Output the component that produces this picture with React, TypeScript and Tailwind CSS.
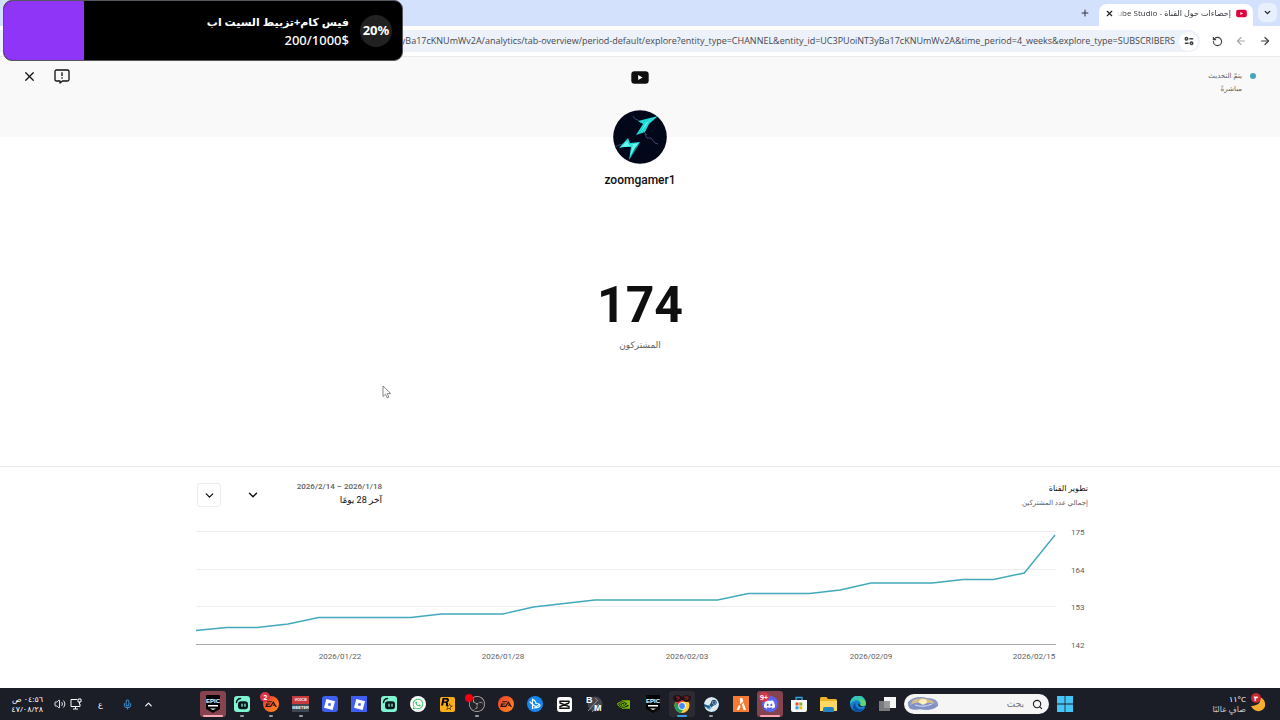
import type { ReactNode } from "react";
import { ArrowLeft, ArrowRight, ChevronDown, ChevronUp, Mic, Plus, RotateCcw, Search, Volume2, X } from "lucide-react";
import { SiDiscord, SiEa, SiNvidia, SiObsstudio, SiRoblox, SiRockstargames, SiSteam } from "react-icons/si";
import { FaWhatsapp } from "react-icons/fa";

const ADDRESS =
  "yBa17cKNUmWv2A/analytics/tab-overview/period-default/explore?entity_type=CHANNEL&entity_id=UC3PUoiNT3yBa17cKNUmWv2A&time_period=4_weeks&explore_type=SUBSCRIBERS";

function GoalOverlay() {
  return (
    <aside className="absolute left-[3px] top-0 z-10 flex h-[61px] w-[400px] items-center overflow-hidden rounded-[9px] border border-[#55565c] bg-black font-['Noto_Sans','DejaVu_Sans',sans-serif] text-white">
      <div className="h-full w-1/5 bg-[#8f35f8]" />
      <div className="flex flex-1 flex-col items-end pr-[11px] text-right">
        <p dir="rtl" className="text-[11px] font-bold leading-[19px]">فيس كام+تزبيط السيت اب</p>
        <p className="text-[13px] font-medium leading-[19px]">200/1000$</p>
      </div>
      <div className="mr-[10px] flex size-8 items-center justify-center rounded-full bg-[#212121] text-[13px] font-bold">20%</div>
    </aside>
  );
}

function TuneIcon() {
  return (
    <svg viewBox="0 0 12 12" className="size-[10px]" fill="none" stroke="#3c4043" strokeWidth="1.8">
      <circle cx="3" cy="3.4" r="1.5" />
      <path d="M6.5 3.4H11M1 8.6h4.5" />
      <circle cx="9" cy="8.6" r="1.5" />
    </svg>
  );
}

function YouTubeMark({ className }: { className: string }) {
  return (
    <svg viewBox="0 0 18 13" className={className}>
      <rect x="0.3" y="0.3" width="17.4" height="12.4" rx="3.2" fill="currentColor" />
      <path d="M7.2 4 11.6 6.5 7.2 9z" fill="#fff" />
    </svg>
  );
}

function BrowserChrome() {
  return (
    <header className="border-b border-[#e9ebe6] bg-white">
      <div className="flex h-[26px] items-end justify-end bg-[#d3e1fd]">
        <button aria-label="علامة تبويب جديدة" className="mr-1 flex h-[26px] w-5 items-center justify-center text-[#30353d]">
          <Plus size={10} strokeWidth={2.5} />
        </button>
        <div className="mr-[5px] flex h-[22px] w-[154px] items-center rounded-t-lg bg-white px-[6px] pb-1">
          <button aria-label="إغلاق" className="text-[#1f1f1f]"><X size={9} strokeWidth={3} /></button>
          <p
            dir="rtl"
            className="ml-auto overflow-hidden whitespace-nowrap font-['Open_Sans','DejaVu_Sans',sans-serif] text-[8px] leading-4 text-[#33363b] [mask-image:linear-gradient(to_right,transparent,black_8px)]"
          >
            إحصاءات حول القناة - ube Studio
          </p>
          <YouTubeMark className="ml-[5px] h-[9px] w-[11px] shrink-0 text-[#e3003c]" />
        </div>
        <button aria-label="بحث في علامات التبويب" className="mb-1 flex h-[19px] w-[19px] items-center justify-center rounded-md bg-[#e8effd] text-[#1f1f1f]">
          <ChevronDown size={9} strokeWidth={3.4} />
        </button>
        <div className="w-[3px]" />
      </div>
      <div className="flex h-[30px] items-center pr-[9px]">
        <div className="flex h-[22px] flex-1 items-center rounded-r-full bg-[#edf1fa] pr-[2px]">
          <input
            aria-label="شريط العناوين"
            readOnly
            value={ADDRESS}
            className="min-w-0 flex-1 bg-transparent text-right font-['Open_Sans',sans-serif] text-[9px] text-[#45484d] outline-none"
          />
          <button aria-label="معلومات الموقع" className="ml-1 flex size-[19px] items-center justify-center rounded-full bg-white"><TuneIcon /></button>
        </div>
        <button aria-label="إعادة التحميل" className="ml-3 text-[#3c4043]"><RotateCcw size={11} strokeWidth={2.4} /></button>
        <button aria-label="التالي" className="ml-3 text-[#a5a7aa]"><ArrowLeft size={12} strokeWidth={2.2} /></button>
        <button aria-label="رجوع" className="ml-3 text-[#3c4043]"><ArrowRight size={12} strokeWidth={2.4} /></button>
      </div>
    </header>
  );
}

function Avatar() {
  return (
    <svg viewBox="0 0 54 54" className="size-[54px]" role="img" aria-label="zoomgamer1">
      <circle cx="27" cy="27" r="26.8" fill="#03071a" />
      <g fill="none" stroke="#4b5288" strokeWidth="0.8">
        <path d="M20 6 22 9l3 1 3 3M32 24l2 4 4 0 4 5 3 1M2 37l4-2 4-1M31 22l3 3" />
      </g>
      <path d="M45 6 36 14 32 22 23 25 30 14 25 11 33 9z" fill="#20d9d6" />
      <path d="M43 7 33 13 28 22 35 12z" fill="#7afff0" />
      <path d="M6 38 15 28 17 33 27 32 16 50 18 37 11 37z" fill="#20d9d6" />
      <path d="M8 37 14 31 16 35 25 33 17 46 20 35 12 37z" fill="#6af7ec" />
      <path d="M27 33 16 50 22 38z" fill="#12858f" />
    </svg>
  );
}

const SERIES = [
  630.5, 627.5, 627.5, 624, 617.5, 617.5, 617.5, 617.5, 614, 614, 614, 607, 603.5, 600, 600, 600, 600, 600, 593.5, 593.5, 593.5, 590, 583, 583, 583, 579.5,
  579.5, 573, 535,
];
const Y_TICKS: [string, number][] = [["175", 531.5], ["164", 569.5], ["153", 606.5], ["142", 644.5]];
const X_TICKS: [string, number][] = [["2026/01/22", 144], ["2026/01/28", 307], ["2026/02/03", 491], ["2026/02/09", 675], ["2026/02/15", 838]];

function SubscribersChart() {
  const points = SERIES.map((y, i) => `${(i * 859) / 28},${y - 520}`).join(" ");
  return (
    <svg viewBox="0 0 892 146" className="w-full font-['Roboto',sans-serif]" role="img" aria-label="إجمالي عدد المشتركين">
      {Y_TICKS.map(([label, y]) => (
        <g key={label}>
          <line x1="0" x2="860" y1={y - 520} y2={y - 520} stroke={label === "142" ? "#a8a8a8" : "#eeeeee"} />
          <text x="875" y={y - 517} fontSize="8" fill="#606060">{label}</text>
        </g>
      ))}
      {X_TICKS.map(([label, x]) => (
        <text key={label} x={x} y="139" fontSize="8" fill="#606060" textAnchor="middle">{label}</text>
      ))}
      <polyline points={points} fill="none" stroke="#41a9bc" strokeWidth="1.4" />
    </svg>
  );
}

function StudioPage() {
  return (
    <main className="flex flex-1 flex-col bg-white font-['Roboto','DejaVu_Sans',sans-serif] text-[#0f0f0f]">
      <section className="h-20 bg-[#f9f9f9]">
        <div className="grid grid-cols-3 items-start px-[22px] pt-3">
          <div className="flex items-center gap-[17px]">
            <button aria-label="إغلاق"><X size={15} strokeWidth={2} /></button>
            <button aria-label="إرسال ملاحظات">
              <svg viewBox="0 0 16 15" className="h-[15px] w-4" fill="none" stroke="currentColor" strokeWidth="1.3">
                <path d="M2.5 1h11q1.5 0 1.5 1.5v8q0 1.5-1.5 1.5H8.5l-2.500 2V12H2.500Q1 12 1 10.500v-8Q1 1 2.500 1z" strokeLinejoin="round" />
                <path d="M8 3.300v3.800M8 8.300v1.400" />
              </svg>
            </button>
          </div>
          <YouTubeMark className="mt-[2px] h-[13px] w-[18px] justify-self-center" />
          <div dir="rtl" className="-mr-[-2px] flex gap-2 pt-px text-[7px] leading-[13px] text-[#606060]">
            <span className="mt-[3px] size-[6px] rounded-full bg-[#41a9bc]" />
            <p>يتمّ التحديث<br />مباشرةً</p>
          </div>
        </div>
      </section>
      <section className="-mt-[27px] flex h-[357px] flex-col items-center border-b border-[#e8e8e8]">
        <Avatar />
        <h1 className="mt-2 text-[12px] font-medium leading-4">zoomgamer1</h1>
        <p className="mt-[89px] text-[50px] font-bold leading-[56px]">174</p>
        <p dir="rtl" className="mt-1 text-[9px] leading-4 text-[#606060]">المشتركون</p>
      </section>
      <section className="mx-auto w-full max-w-4xl pl-1 pt-[14px]">
        <div className="flex h-[39px] items-start justify-between">
          <div className="flex pl-px">
            <button aria-label="خيارات" className="mt-[2px] flex size-6 items-center justify-center rounded-[3px] border border-[#ececec]"><ChevronDown size={13} strokeWidth={2.4} /></button>
            <button className="ml-[25px] flex items-start text-right">
              <ChevronDown size={14} strokeWidth={2.4} className="mt-[7px]" />
              <span dir="rtl" className="ml-[30px] block w-[92px]">
                <span className="block text-[8px] font-medium leading-[12px] text-[#606060]">2026/1/18 – 2026/2/14</span>
                <span className="block text-[9px] leading-[14px]">آخر 28 يومًا</span>
              </span>
            </button>
          </div>
          <div dir="rtl">
            <h2 className="text-[8px] leading-4">تطوير القناة</h2>
            <p className="text-[7px] leading-[13px] text-[#606060]">إجمالي عدد المشتركين</p>
          </div>
        </div>
        <SubscribersChart />
      </section>
    </main>
  );
}

function Epic() {
  return (
    <svg viewBox="0 0 16 18" className="h-[18px] w-4 font-['Liberation_Sans',sans-serif]" fontWeight="bold" fill="#fff">
      <path d="M2 0h12q1 0 1 1v13l-7 4-7-4V1q0-1 1-1z" fill="#050505" />
      <text x="8" y="8" fontSize="6" textAnchor="middle">EPIC</text>
      <path d="M3 10h10v1.500H3zM5 13.500h6L8 15z" />
    </svg>
  );
}

function Streamlabs() {
  return (
    <svg viewBox="0 0 16 16" className="size-4">
      <rect width="16" height="16" rx="3" fill="#80f5d2" />
      <path d="M2.500 6.500a4 4 0 0 1 4-4" fill="none" stroke="#09161d" strokeWidth="1.5" strokeLinecap="round" />
      <rect x="4" y="5.200" width="10" height="8" rx="3" fill="#09161d" />
      <path d="M8 8.200v2M11 8.200v2" stroke="#80f5d2" strokeWidth="1.300" strokeLinecap="round" />
    </svg>
  );
}

function Roblox({ round }: { round: boolean }) {
  return (
    <span className={round ? "flex size-4 items-center justify-center rounded-[3px] bg-[#3f5ff0] text-white" : "flex size-4 items-center justify-center bg-[#3f5ff0] text-white"}>
      <SiRoblox size={11} />
    </span>
  );
}

function Ea() {
  return (
    <span className="flex size-4 items-center justify-center rounded-full bg-linear-to-br from-[#f0352d] to-[#ff8a1d] text-[#25100c]"><SiEa size={12} /></span>
  );
}

function Chrome() {
  return (
    <svg viewBox="0 0 20 20" className="size-5">
      <circle cx="10" cy="11.500" r="7.500" fill="#ffcd40" />
      <path d="M3.500 7.700A7.500 7.500 0 0 0 9 18.900L13 12.500l-3-4z" fill="#22a05b" />
      <path d="M3.500 7.700A7.500 7.500 0 0 1 16.500 7.800H10L7 12.500z" fill="#e33b2e" />
      <circle cx="10" cy="12" r="3.700" fill="#fff" />
      <circle cx="10" cy="12" r="2.900" fill="#4386f5" />
      <path d="M1 3q4-4 9 0 4-4 9 0 0 5-5 5l-4-2-4 2Q1 8 1 3z" fill="#201014" />
      <path d="M4 3h3v2H5M12 3h4v2h-3" fill="none" stroke="#9e2428" strokeWidth="1" />
    </svg>
  );
}

type App = { name: string; icon: ReactNode; badge?: string; state?: "alert" | "open" | "active"; rail?: boolean };

const APPS: App[] = [
  { name: "Epic Games", icon: <Epic />, state: "alert" },
  { name: "Streamlabs", icon: <Streamlabs />, rail: true },
  { name: "EA", icon: <Ea />, badge: "2", rail: true },
  {
    name: "Voicemeeter",
    rail: true,
    icon: (
      <span className="block w-[17px] overflow-hidden bg-[#3d4653] text-center font-['Liberation_Sans',sans-serif] text-[4px] font-bold leading-[8px] text-white">
        <span className="block bg-[#c7393b]">VOICE</span>
        <span className="block">MEETER</span>
      </span>
    ),
  },
  { name: "Roblox", icon: <Roblox round /> },
  { name: "Roblox Studio", icon: <Roblox round={false} /> },
  { name: "Streamlabs Desktop", icon: <Streamlabs /> },
  { name: "WhatsApp", icon: <span className="flex size-4 items-center justify-center rounded-full bg-white text-[#35c75a]"><FaWhatsapp size={12} /></span> },
  { name: "Rockstar", icon: <span className="flex size-[15px] items-center justify-center rounded-[2px] bg-[#fcaf17] text-black"><SiRockstargames size={12} /></span> },
  {
    name: "OBS",
    rail: true,
    icon: <span className="relative flex size-4 items-center justify-center rounded-full bg-[#242427] text-[#b8b8bc]"><SiObsstudio size={16} /><i className="absolute -left-1 -top-[2px] size-2 rounded-full bg-[#f0000d]" /></span>,
  },
  { name: "EA Play", icon: <Ea /> },
  {
    name: "Battle.net",
    icon: (
      <svg viewBox="0 0 16 16" className="size-4">
        <circle cx="8" cy="8" r="8" fill="#1687ed" />
        <path d="M5.500 3v9.500M5.500 3.500q3 .5 3.500 4 4 0 4 2 0 2-6 2.500M3 6l4 3.500q3 2 5-1" fill="none" stroke="#fff" strokeWidth="1.200" strokeLinecap="round" />
      </svg>
    ),
  },
  {
    name: "CapCut",
    icon: (
      <svg viewBox="0 0 15 15" className="size-[15px]">
        <rect width="15" height="15" rx="3" fill="#fff" />
        <path d="M12 6V4.300H3V6l9 3.500v1.700H3V9.500L12 6" fill="none" stroke="#111" strokeWidth="1.400" />
      </svg>
    ),
  },
  {
    name: "Benchmark",
    icon: (
      <svg viewBox="0 0 18 18" className="size-[18px] font-['Liberation_Sans',sans-serif]" fontSize="9" fontWeight="bold" fill="#fff">
        <circle cx="10" cy="9" r="7.500" fill="#46474c" />
        <path d="m3 16 9-10M7 17l7-8M10 3l3 3" stroke="#8d8d92" strokeWidth="1" />
        <text x="1" y="8">B</text>
        <text x="9" y="16">M</text>
      </svg>
    ),
  },
  { name: "NVIDIA", icon: <span className="flex text-[#76b900]"><SiNvidia size={13} /></span> },
  { name: "Epic Games Store", icon: <Epic /> },
  { name: "Chrome", icon: <Chrome />, state: "active" },
  {
    name: "Steam",
    rail: true,
    icon: <span className="flex rounded-full bg-white bg-linear-to-b from-[#15264a] to-[#1b86b8] text-[#12315a]"><SiSteam size={15} color="#dfeaf0" className="rounded-full" /></span>,
  },
  {
    name: "FiveM",
    icon: (
      <svg viewBox="0 0 16 16" className="size-4">
        <rect width="16" height="16" fill="#f57b32" />
        <path d="M6.800 2h2.400l1 3-3 3.500zM6 9 3.500 14H6l1.500-4zM10.300 6 13 14h-2.500L9 9z" fill="#fff" />
      </svg>
    ),
  },
  { name: "Discord", state: "alert", badge: "9+", icon: <span className="flex size-4 items-center justify-center rounded-full bg-[#5765f2] text-white"><SiDiscord size={11} /></span> },
  {
    name: "Microsoft Store",
    icon: (
      <svg viewBox="0 0 16 17" className="h-[17px] w-4">
        <path d="M5 5V1.500h6V5" fill="none" stroke="#24a8e8" strokeWidth="1.300" />
        <path d="M0 4h16v10q0 2-2 2H2q-2 0-2-2z" fill="#f6f6f6" />
        <path d="M4.500 6.500h3v3h-3z" fill="#ed4d2d" /><path d="M8.300 6.500h3v3h-3z" fill="#7fba22" />
        <path d="M4.500 10.300h3v3h-3z" fill="#22a4ef" /><path d="M8.300 10.300h3v3h-3z" fill="#ffb902" />
      </svg>
    ),
  },
  {
    name: "Explorer",
    icon: (
      <svg viewBox="0 0 17 15" className="h-[15px] w-[17px]">
        <path d="M0 1.500Q0 0 1.500 0h5L8 2h7.500Q17 2 17 3.500V14H0z" fill="#f2b427" />
        <path d="M0 4h17v10H0z" fill="#ffd85f" /><path d="M3 15v-3q0-2 2-2h7q2 0 2 2v3z" fill="#2084c5" />
      </svg>
    ),
  },
  {
    name: "Edge",
    icon: (
      <svg viewBox="0 0 16 16" className="size-4">
        <circle cx="8" cy="8" r="8" fill="#1681d2" />
        <path d="M0 8a8 8 0 0 1 16-1c0 4-5 4-6 2 2-3-3-6-6-4Q1 6 0 8z" fill="#35c6b5" />
        <path d="M9 3a7 7 0 0 1 7 4c0 3-4 4-6 2 2-2 0-5-1-6z" fill="#65d66b" />
        <path d="M6 7q-2 4 3 6 3 1 5-1-3 5-8 3.500Q1 13 4 8z" fill="#0d4d9d" />
        <path d="M9 7q-2 3 2 4h5v-1q-4 2-6-1z" fill="#1d2029" />
      </svg>
    ),
  },
  {
    name: "Task view",
    icon: (
      <svg viewBox="0 0 17 15" className="h-[15px] w-[17px]">
        <path d="M5 0h12v11H5z" fill="#f5f5f5" /><path d="M0 4h11v10H0z" fill="#8a8b8e" opacity="0.85" />
      </svg>
    ),
  },
];

function TaskbarApp({ app }: { app: App }) {
  const frame =
    app.state === "alert" ? "bg-[#85424f]" : app.state === "active" ? "bg-[#2c2b32]" : "";
  const rail =
    app.state === "alert" ? "w-5 bg-[#ffa4b0]" : app.state === "active" ? "w-[10px] bg-[#3aa0e8]" : "w-1 bg-[#9a9ba0]";
  return (
    <button aria-label={app.name} className="flex flex-1 items-center justify-center">
      <span className={`relative flex h-[26px] w-[26px] items-center justify-center rounded-[3px] ${frame}`}>
        {app.icon}
        {(app.state || app.rail) && <i className={`absolute bottom-0 h-[2px] rounded-full ${rail}`} />}
        {app.badge && (
          <b className="absolute left-[2px] top-[1px] flex h-[10px] min-w-[10px] items-center justify-center rounded-full bg-[#d9364a] font-['Open_Sans',sans-serif] text-[7px] leading-none text-white">
            {app.badge}
          </b>
        )}
      </span>
    </button>
  );
}

function Taskbar() {
  return (
    <footer className="flex h-8 items-center bg-[#1b1d27] font-['Open_Sans','DejaVu_Sans',sans-serif] text-white">
      <div className="flex w-[198px] shrink-0 items-center pl-[11px]">
        <p dir="rtl" className="w-8 whitespace-nowrap text-[8px] leading-[10px]">٠٤:٥٦ ص<br />٤٧/٠٨/٢٨</p>
        <Volume2 size={12} strokeWidth={1.8} className="ml-[11px]" />
        <svg viewBox="0 0 12 12" className="ml-1 size-3" fill="none" stroke="#fff" strokeWidth="1">
          <path d="M7 1.500H1v7h9V6M3 11h5M5.500 8.500V11M8 1v3h3V1zM9.500 4v2.500" />
        </svg>
        <span className="ml-[16px] w-2 text-[8px]">ع</span>
        <Mic size={11} strokeWidth={2.2} className="ml-[16px] text-[#3c8fd3]" />
        <button aria-label="إظهار الرموز المخفية" className="ml-[10px]"><ChevronUp size={11} strokeWidth={2.6} /></button>
      </div>
      <nav className="flex w-[704px] min-w-0">{APPS.map((app) => <TaskbarApp key={app.name} app={app} />)}</nav>
      <div className="ml-[2px] flex h-5 w-[145px] shrink-0 items-center rounded-full bg-[#f5f5f6] pl-[3px] pr-[6px]">
        <svg viewBox="0 0 32 14" className="h-[14px] w-8 shrink-0">
          <path d="M1 5Q8-2 20 1q12 0 11 8Q24 15 12 12 0 15 1 5z" fill="#8998c4" />
          <path d="M6 3q10-4 20 1l2 5H3z" fill="#d7bc89" /><ellipse cx="16" cy="5" rx="4" ry="3" fill="#fff2bf" />
          <path d="M2 9q8-6 14-1 7-5 14 1-6 5-14 2-8 4-14-2z" fill="#8090c4" /><path d="M8 8q8 3 17-1" fill="none" stroke="#d8e2fa" />
        </svg>
        <input dir="rtl" aria-label="بحث" placeholder="بحث" className="mr-2 min-w-0 flex-1 bg-transparent text-[9px] text-[#606060] outline-none placeholder:text-[#707070]" />
        <Search size={11} strokeWidth={2.4} className="shrink-0 text-[#1c1e26]" />
      </div>
      <button aria-label="ابدأ" className="ml-2 shrink-0">
        <svg viewBox="0 0 16 16" className="size-4"><path d="M0 0h7.600v7.600H0zM8.400 0H16v7.600H8.400zM0 8.400h7.600V16H0zM8.400 8.400H16V16H8.400z" fill="#45c4f7" /></svg>
      </button>
      <div dir="rtl" className="flex flex-1 items-center pr-[14px]">
        <span className="relative">
          <svg viewBox="0 0 16 16" className="size-4"><path d="M9 1q4 8-8 9 3 6 9 5 6-2 5-8-1-5-6-6z" fill="#f8ad31" /></svg>
          <b className="absolute -top-[3px] right-[5px] flex size-[10px] items-center justify-center rounded-full bg-[#c52932] text-[7px] leading-none">٣</b>
        </span>
        <p className="mr-1 text-[8px] leading-[10px]"><bdi dir="ltr">١١°C</bdi><br /><span className="text-[#c9c9cc]">صافٍ غالبًا</span></p>
      </div>
    </footer>
  );
}

export default function App() {
  return (
    <div className="relative flex min-h-screen flex-col overflow-x-hidden bg-white">
      <GoalOverlay />
      <BrowserChrome />
      <StudioPage />
      <Taskbar />
      <svg viewBox="0 0 10 14" className="absolute left-[382px] top-[385px] h-[14px] w-[10px]" fill="#fff" stroke="#77797c" strokeWidth="0.9">
        <path d="M1 1v10.500l2.500-2.300 1.800 3.800 1.600-.8-1.700-3.600h3.600z" strokeLinejoin="round" />
      </svg>
    </div>
  );
}
